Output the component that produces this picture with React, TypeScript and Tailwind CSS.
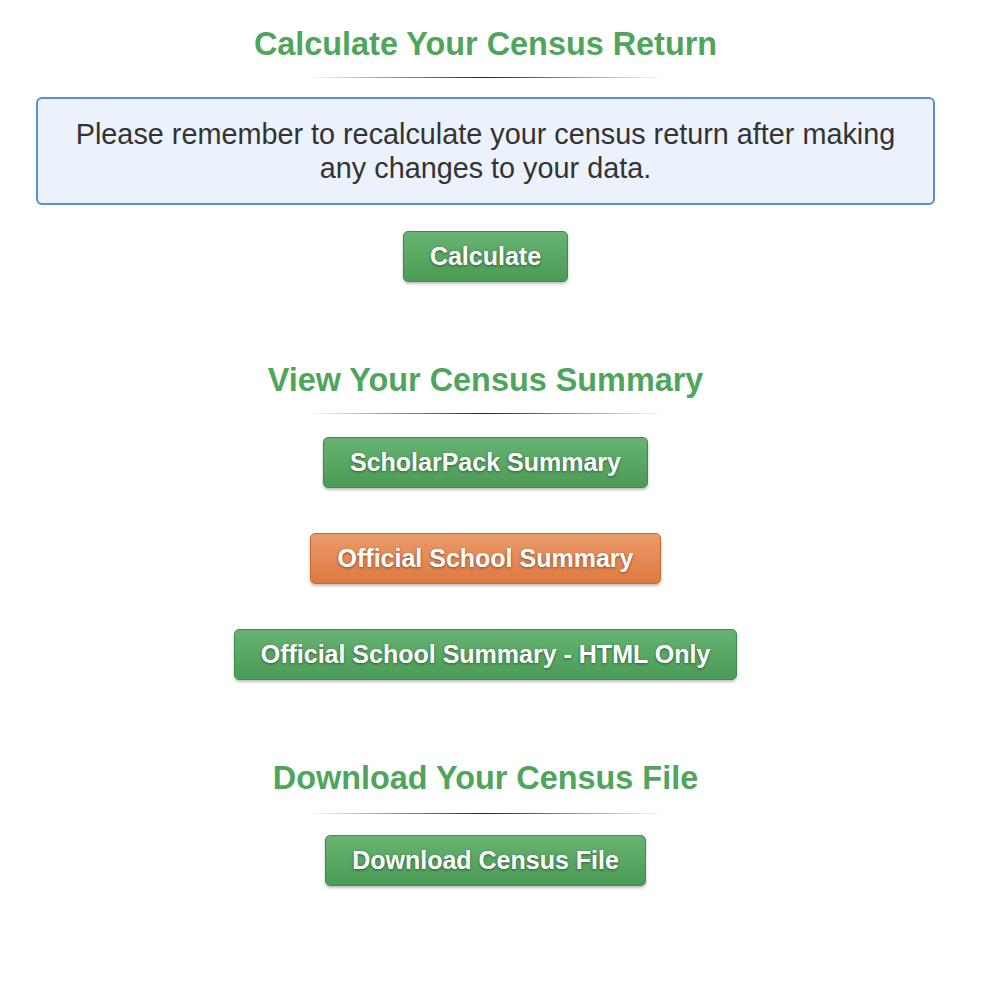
import React from 'react'

const font = { fontFamily: '"Liberation Sans", Arial, sans-serif' }

const Heading: React.FC<{ children: React.ReactNode; gap?: string }> = ({ children, gap = 'mt-[15px]' }) => (
  <div className="flex flex-col items-center">
    <h2 className="text-[32.4px] leading-[36px] font-bold text-[#4fa55b]">{children}</h2>
    <div className={`${gap} h-px w-[358px] bg-[linear-gradient(to_right,rgba(0,0,0,0),rgba(0,0,0,0.85),rgba(0,0,0,0))]`} />
  </div>
)

const Btn: React.FC<{ children: React.ReactNode; orange?: boolean }> = ({ children, orange }) => (
  <button
    className={
      orange
        ? 'h-[51px] px-[27px] rounded-[5px] border border-[#c9672e] bg-[linear-gradient(to_bottom,#eb9a6c,#df7a40)] text-[25px] font-bold text-white [text-shadow:0_1px_3px_rgba(0,0,0,0.45)] shadow-[0_2px_3px_rgba(0,0,0,0.25)]'
        : 'h-[51px] px-[26px] rounded-[5px] border border-[#3f8a4a] bg-[linear-gradient(to_bottom,#68b372,#4a9b55)] text-[25px] font-bold text-white [text-shadow:0_1px_3px_rgba(0,0,0,0.45)] shadow-[0_2px_3px_rgba(0,0,0,0.25)]'
    }
  >
    {children}
  </button>
)

export default function App() {
  return (
    <div className="w-[971px] bg-white px-[36px] pt-[26px] pb-[110px]" style={font}>
      {/* Calculate */}
      <Heading>Calculate Your Census Return</Heading>
      <div className="mt-[19px] rounded-[6px] border-2 border-[#5b8dd0] bg-[#ebf2fb] px-6 py-[18px] text-center text-[28.8px] leading-[34px] text-[#333333]">
        Please remember to recalculate your census return after making
        <br />
        any changes to your data.
      </div>
      <div className="mt-[26px] flex justify-center">
        <Btn>Calculate</Btn>
      </div>

      {/* Summary */}
      <div className="mt-[80px]">
        <Heading>View Your Census Summary</Heading>
      </div>
      <div className="mt-[23px] flex flex-col items-center gap-[45px]">
        <Btn>ScholarPack Summary</Btn>
        <Btn orange>Official School Summary</Btn>
        <Btn>Official School Summary - HTML Only</Btn>
      </div>

      {/* Download */}
      <div className="mt-[80px]">
        <Heading gap="mt-[17px]">Download Your Census File</Heading>
      </div>
      <div className="mt-[21px] flex justify-center">
        <Btn>Download Census File</Btn>
      </div>
    </div>
  )
}
